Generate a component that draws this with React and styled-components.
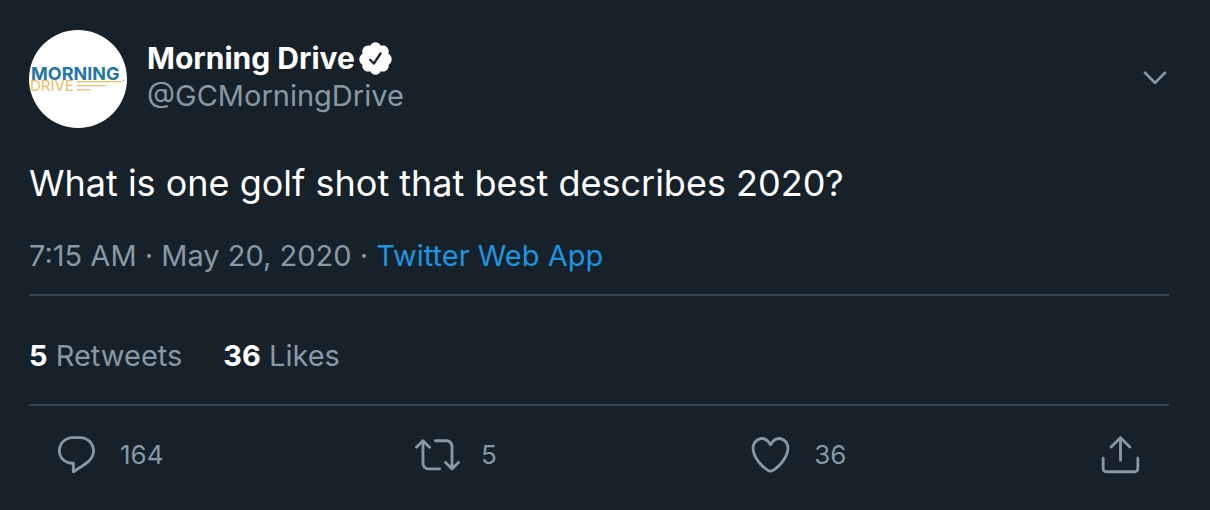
import React from 'react'
import styled, { createGlobalStyle } from 'styled-components';

const GlobalStyle = createGlobalStyle`
body {
  margin: 0;
  background: #17212a;
  font-family: Inter, "Liberation Sans", sans-serif;
}
`;

const Tweet = styled.article`
padding: 30px 41px 28px 29px;
color: #ffffff;
`;

const Header = styled.header`
display: flex;
align-items: flex-start;
`;

const Avatar = styled.svg`
width: 98px;
height: 98px;
flex: none;
margin-right: 20px;
`;

const Author = styled.div`
flex: 1;
padding-top: 9px;
`;

const NameRow = styled.div`
display: flex;
align-items: center;
gap: 2px;
`;

const Name = styled.h1`
margin: 0;
font-size: 30px;
font-weight: 700;
line-height: 38px;
`;

const Handle = styled.p`
margin: 0;
font-size: 29px;
line-height: 38px;
color: #8899a6;
`;

const Icon = styled.svg`
display: block;
flex: none;
width: ${props => props.$size}px;
height: ${props => props.$size}px;
fill: currentColor;
`;

const IconButton = styled.button`
display: flex;
align-items: center;
gap: 21px;
padding: 0;
border: none;
background: none;
color: #8899a6;
font-family: inherit;
font-size: 26px;
line-height: 32px;
cursor: pointer;
`;

const MenuButton = styled(IconButton)`
margin-top: 31px;
margin-right: -2px;
`;

const Message = styled.p`
margin: 30px 0 0;
font-size: 36px;
font-weight: 400;
line-height: 50px;
`;

const Meta = styled.p`
margin: 28px 0 0;
padding-bottom: 19px;
border-bottom: 2px solid #38444d;
font-size: 29px;
line-height: 39px;
color: #8899a6;
`;

const SourceLink = styled.a`
color: #1d95e0;
text-decoration: none;
`;

const Stats = styled.div`
display: flex;
gap: 41px;
padding: 40px 0 29px;
border-bottom: 2px solid #38444d;
`;

const Stat = styled.a`
font-size: 29px;
line-height: 39px;
color: #8899a6;
text-decoration: none;
`;

const StatCount = styled.strong`
font-weight: 700;
color: #ffffff;
`;

const Actions = styled.div`
display: flex;
justify-content: space-between;
padding: 26px 26px 0 25px;
`;

const icons = {
  verified: 'M22.5 12.5c0-1.58-.875-2.95-2.148-3.6.154-.435.238-.905.238-1.4 0-2.21-1.71-3.998-3.818-3.998-.47 0-.92.084-1.336.25C14.818 2.415 13.51 1.5 12 1.5s-2.816.917-3.437 2.25c-.415-.165-.866-.25-1.336-.25-2.11 0-3.818 1.79-3.818 4 0 .494.083.964.237 1.4-1.272.65-2.147 2.018-2.147 3.6 0 1.495.782 2.798 1.942 3.486-.02.17-.032.34-.032.514 0 2.21 1.708 4 3.818 4 .47 0 .92-.086 1.335-.25.62 1.334 1.926 2.25 3.437 2.25 1.512 0 2.818-.916 3.437-2.25.415.163.865.248 1.336.248 2.11 0 3.818-1.79 3.818-4 0-.174-.012-.344-.033-.513 1.158-.687 1.943-1.99 1.943-3.484zm-6.616-3.334l-4.334 6.5c-.145.217-.382.334-.625.334-.143 0-.288-.04-.416-.126l-.115-.094-2.415-2.415c-.293-.293-.293-.768 0-1.06s.768-.294 1.06 0l1.77 1.767 3.825-5.74c.23-.345.696-.436 1.04-.207.346.23.44.696.21 1.04z',
  chevron: 'M20.207 8.147c-.39-.39-1.023-.39-1.414 0L12 14.94 5.207 8.147c-.39-.39-1.023-.39-1.414 0-.39.39-.39 1.023 0 1.414l7.5 7.5c.195.196.45.294.707.294s.512-.098.707-.293l7.5-7.5c.39-.39.39-1.022 0-1.413z',
  reply: 'M14.046 2.242l-4.148-.01h-.002c-4.374 0-7.8 3.427-7.8 7.802 0 4.098 3.186 7.206 7.465 7.37v3.828c0 .108.044.286.12.403.142.225.384.347.632.347.138 0 .277-.038.402-.118.264-.168 6.473-4.14 8.088-5.506 1.902-1.61 3.04-3.97 3.043-6.312v-.017c-.006-4.367-3.43-7.787-7.8-7.788zm3.787 12.972c-1.134.96-4.862 3.405-6.772 4.643V16.67c0-.414-.335-.75-.75-.75h-.396c-3.66 0-6.318-2.476-6.318-5.886 0-3.534 2.768-6.302 6.3-6.302l4.147.01h.002c3.532 0 6.3 2.766 6.302 6.296-.003 1.91-.942 3.844-2.514 5.176z',
  retweet: 'M23.77 15.67c-.292-.293-.767-.293-1.06 0l-2.22 2.22V7.65c0-2.068-1.683-3.75-3.75-3.75h-5.85c-.414 0-.75.336-.75.75s.336.75.75.75h5.85c1.24 0 2.25 1.01 2.25 2.25v10.24l-2.22-2.22c-.293-.293-.768-.293-1.06 0s-.294.768 0 1.06l3.5 3.5c.145.147.337.22.53.22s.383-.072.53-.22l3.5-3.5c.294-.292.294-.767 0-1.06zm-10.66 3.28H7.26c-1.24 0-2.25-1.01-2.25-2.25V6.46l2.22 2.22c.148.147.34.22.532.22s.384-.073.53-.22c.293-.293.293-.768 0-1.06l-3.5-3.5c-.293-.294-.768-.294-1.06 0l-3.5 3.5c-.294.292-.294.767 0 1.06s.767.293 1.06 0l2.22-2.22V16.7c0 2.068 1.683 3.75 3.75 3.75h5.85c.414 0 .75-.336.75-.75s-.337-.75-.75-.75z',
  like: 'M12 21.638h-.014C9.403 21.59 1.95 14.856 1.95 8.478c0-3.064 2.525-5.754 5.403-5.754 2.29 0 3.83 1.58 4.646 2.73.814-1.148 2.354-2.73 4.645-2.73 2.88 0 5.404 2.69 5.404 5.755 0 6.376-7.454 13.11-10.037 13.157H12zM7.354 4.225c-2.08 0-3.903 1.988-3.903 4.255 0 5.74 7.034 11.596 8.55 11.658 1.518-.062 8.55-5.917 8.55-11.658 0-2.267-1.823-4.255-3.903-4.255-2.528 0-3.94 2.936-3.952 2.965-.23.562-1.156.562-1.387 0-.014-.03-1.425-2.965-3.954-2.965z',
  share: 'M17.53 7.47l-5-5c-.293-.293-.768-.293-1.06 0l-5 5c-.294.293-.294.768 0 1.06s.767.294 1.06 0l3.72-3.72V15c0 .414.336.75.75.75s.75-.336.75-.75V4.81l3.72 3.72c.146.147.338.22.53.22s.384-.072.53-.22c.293-.293.293-.767 0-1.06zM19.708 21.944H4.292C3.028 21.944 2 20.916 2 19.652V14c0-.414.336-.75.75-.75s.75.336.75.75v5.652c0 .437.355.792.792.792h15.416c.437 0 .792-.355.792-.792V14c0-.414.336-.75.75-.75s.75.336.75.75v5.652c0 1.264-1.028 2.292-2.292 2.292z',
};

const actions = [
  { name: 'reply', label: 'Reply', count: 164 },
  { name: 'retweet', label: 'Retweet', count: 5 },
  { name: 'like', label: 'Like', count: 36 },
  { name: 'share', label: 'Share' },
];

const SvgIcon = ({ name, size }) => (
  <Icon $size={size} viewBox="0 0 24 24" aria-hidden="true">
    <path d={icons[name]} />
  </Icon>
)

const Logo = () => (
  <Avatar viewBox="0 0 98 98" role="img" aria-label="Morning Drive">
    <circle cx="49" cy="49" r="49" fill="#ffffff" />
    <text x="2" y="50" fontFamily="Inter" fontWeight="700" fontSize="18" fill="#2474a8">MORNING</text>
    <text x="1" y="61" fontFamily="Inter" fontSize="15" fill="#edbd62">DRIVE</text>
    <g fill="#edbd62">
      <rect x="48" y="51" width="45" height="1.2" />
      <rect x="48" y="55" width="29" height="1.2" />
      <rect x="48" y="59.3" width="14" height="1.2" />
    </g>
    <circle cx="94.5" cy="50.5" r="0.6" fill="#2474a8" />
  </Avatar>
)

class App extends React.Component {

  render() {

    return(
      <>
      <GlobalStyle />
      <Tweet>
        <Header>
          <Logo />
          <Author>
            <NameRow>
              <Name>Morning Drive</Name>
              <SvgIcon name="verified" size={37} />
            </NameRow>
            <Handle>@GCMorningDrive</Handle>
          </Author>
          <MenuButton type="button" aria-label="More">
            <SvgIcon name="chevron" size={32} />
          </MenuButton>
        </Header>

        <Message>What is one golf shot that best describes 2020?</Message>
        <Meta>
          7:15 AM · May 20, 2020 · <SourceLink href="#source">Twitter Web App</SourceLink>
        </Meta>

        <Stats>
          <Stat href="#retweets"><StatCount>5</StatCount> Retweets</Stat>
          <Stat href="#likes"><StatCount>36</StatCount> Likes</Stat>
        </Stats>

        <Actions>
          { actions.map(action => (
            <IconButton key={action.name} type="button" aria-label={action.label}>
              <SvgIcon name={action.name} size={45} />
              {action.count}
            </IconButton>
          ))}
        </Actions>
      </Tweet>
      </>
    )
  }
}

export default App;
